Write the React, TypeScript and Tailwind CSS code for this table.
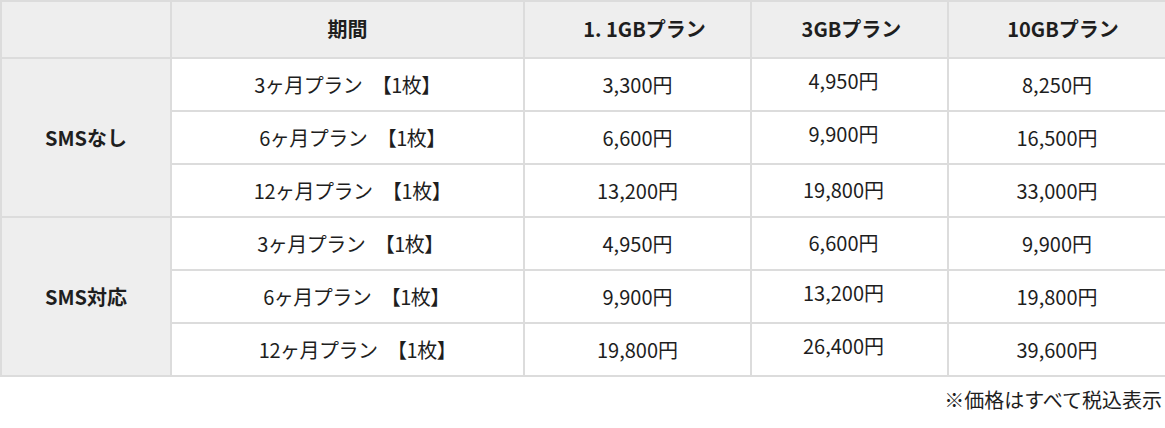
import React from "react";

const font = {
  fontFamily: '"Noto Sans CJK JP", "Noto Sans", sans-serif',
};

type Row = {
  period: string;
  a: string;
  b: string;
  c: string;
  pCls: string;
  bCls: string;
};

const groups: { label: string; rows: Row[] }[] = [
  {
    label: "SMSなし",
    rows: [
      { period: "3ヶ月プラン\u2002【1枚】", a: "3,300円", b: "4,950円", c: "8,250円", pCls: "pl-0", bCls: "top-[-4px]" },
      { period: "6ヶ月プラン\u2002【1枚】", a: "6,600円", b: "9,900円", c: "16,500円", pCls: "pl-[10px]", bCls: "top-[-4px]" },
      { period: "12ヶ月プラン\u2002【1枚】", a: "13,200円", b: "19,800円", c: "33,000円", pCls: "pl-[10px]", bCls: "top-[-1px]" },
    ],
  },
  {
    label: "SMS対応",
    rows: [
      { period: "3ヶ月プラン\u2002【1枚】", a: "4,950円", b: "6,600円", c: "9,900円", pCls: "pl-[6px]", bCls: "top-[-1px]" },
      { period: "6ヶ月プラン\u2002【1枚】", a: "9,900円", b: "13,200円", c: "19,800円", pCls: "pl-[18px]", bCls: "top-[-4px]" },
      { period: "12ヶ月プラン\u2002【1枚】", a: "19,800円", b: "26,400円", c: "39,600円", pCls: "pl-[20px]", bCls: "top-[-4px]" },
    ],
  },
];

const cell = "border-2 border-[#dcdcdc] text-center";

export default function App() {
  return (
    <div className="w-[1165px] bg-white text-[#1e1e1e]" style={font}>
      <table className="w-full border-collapse table-fixed text-[20px] leading-[28px]">
        <colgroup>
          <col className="w-[170px]" />
          <col className="w-[353px]" />
          <col className="w-[227px]" />
          <col className="w-[197px]" />
          <col className="w-[218px]" />
        </colgroup>
        <thead>
          <tr className="h-[57px] bg-[#eeeeee]">
            <th className={cell}></th>
            <th className={`${cell} font-bold pb-[2px]`}>期間</th>
            <th className={`${cell} font-bold pb-[2px] pl-[14px]`}>1. 1GBプラン</th>
            <th className={`${cell} font-bold pb-[2px] pl-[4px]`}>3GBプラン</th>
            <th className={`${cell} font-bold pb-[2px] pl-[12px]`}>10GBプラン</th>
          </tr>
        </thead>
        <tbody>
          {groups.map((g) =>
            g.rows.map((r, i) => (
              <tr key={g.label + i} className="h-[53px]">
                {i === 0 && (
                  <td rowSpan={3} className={`${cell} bg-[#eeeeee] font-bold`}>
                    {g.label}
                  </td>
                )}
                <td className={`${cell} ${r.pCls} tracking-[-0.5px]`}>{r.period}</td>
                <td className={cell}>{r.a}</td>
                <td className={`${cell} pr-[12px]`}>
                  <span className={`relative ${r.bCls}`}>{r.b}</span>
                </td>
                <td className={cell}>{r.c}</td>
              </tr>
            ))
          )}
        </tbody>
      </table>
      <div className="mt-[8px] pr-[3px] text-right text-[20px] leading-[30px]">
        ※価格はすべて税込表示
      </div>
    </div>
  );
}
